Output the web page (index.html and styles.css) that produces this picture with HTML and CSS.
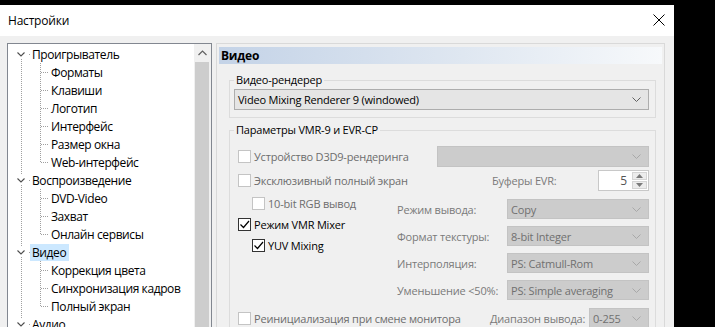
FILE: index.html
```html
<!DOCTYPE html>
<html lang="ru">
<head>
    <meta charset="UTF-8">
    <title>Настройки</title>
    <link rel="stylesheet" href="styles.css">
</head>
<body>
    <div class="window">
        <div class="titlebar">
            <span class="title">Настройки</span>
            <span class="close">
                <svg width="12" height="12" viewBox="0 0 12 12"><path d="M0.5 0.5L11.5 11.5M11.5 0.5L0.5 11.5"/></svg>
            </span>
        </div>
        <div class="dialog">
            <!-- page tree -->
            <div class="tree">
                <div class="tree-list">
                    <div class="node top">
                        <svg class="lines" width="22" height="18"><path d="M13.5 14V18M21 9.5H22"/><path class="chev" d="M9.5 7.5L13 11L16.5 7.5"/></svg>
                        <span class="label">Проигрыватель</span>
                    </div>
                    <div class="node"><svg class="lines" width="41" height="18"><path d="M13.5 0V18M32.5 0V18M33 9.5H41"/></svg><span class="label">Форматы</span></div>
                    <div class="node"><svg class="lines" width="41" height="18"><path d="M13.5 0V18M32.5 0V18M33 9.5H41"/></svg><span class="label">Клавиши</span></div>
                    <div class="node"><svg class="lines" width="41" height="18"><path d="M13.5 0V18M32.5 0V18M33 9.5H41"/></svg><span class="label">Логотип</span></div>
                    <div class="node"><svg class="lines" width="41" height="18"><path d="M13.5 0V18M32.5 0V18M33 9.5H41"/></svg><span class="label">Интерфейс</span></div>
                    <div class="node"><svg class="lines" width="41" height="18"><path d="M13.5 0V18M32.5 0V18M33 9.5H41"/></svg><span class="label">Размер окна</span></div>
                    <div class="node"><svg class="lines" width="41" height="18"><path d="M13.5 0V18M32.5 0V10M33 9.5H41"/></svg><span class="label">Web-интерфейс</span></div>
                    <div class="node top">
                        <svg class="lines" width="22" height="18"><path d="M13.5 0V4M13.5 14V18M21 9.5H22"/><path class="chev" d="M9.5 7.5L13 11L16.5 7.5"/></svg>
                        <span class="label">Воспроизведение</span>
                    </div>
                    <div class="node"><svg class="lines" width="41" height="18"><path d="M13.5 0V18M32.5 0V18M33 9.5H41"/></svg><span class="label">DVD-Video</span></div>
                    <div class="node"><svg class="lines" width="41" height="18"><path d="M13.5 0V18M32.5 0V18M33 9.5H41"/></svg><span class="label">Захват</span></div>
                    <div class="node"><svg class="lines" width="41" height="18"><path d="M13.5 0V18M32.5 0V10M33 9.5H41"/></svg><span class="label">Онлайн сервисы</span></div>
                    <div class="node top">
                        <svg class="lines" width="22" height="18"><path d="M13.5 0V4M13.5 14V18M21 9.5H22"/><path class="chev" d="M9.5 7.5L13 11L16.5 7.5"/></svg>
                        <span class="label selected">Видео</span>
                    </div>
                    <div class="node"><svg class="lines" width="41" height="18"><path d="M13.5 0V18M32.5 0V18M33 9.5H41"/></svg><span class="label">Коррекция цвета</span></div>
                    <div class="node"><svg class="lines" width="41" height="18"><path d="M13.5 0V18M32.5 0V18M33 9.5H41"/></svg><span class="label">Синхронизация кадров</span></div>
                    <div class="node"><svg class="lines" width="41" height="18"><path d="M13.5 0V18M32.5 0V10M33 9.5H41"/></svg><span class="label">Полный экран</span></div>
                    <div class="node top">
                        <svg class="lines" width="22" height="18"><path d="M13.5 0V4M13.5 14V18M21 9.5H22"/><path class="chev" d="M9.5 7.5L13 11L16.5 7.5"/></svg>
                        <span class="label">Аудио</span>
                    </div>
                </div>
                <div class="scrollbar">
                    <div class="sb-up">
                        <svg width="9" height="6" viewBox="0 0 9 6"><path d="M0.5 5L4.5 1L8.5 5"/></svg>
                    </div>
                    <div class="sb-thumb"></div>
                </div>
            </div>

            <!-- property page -->
            <div class="page">
                <div class="page-header">Видео</div>

                <fieldset class="group">
                    <legend>Видео-рендерер</legend>
                    <div class="combo">
                        <span class="combo-text">Video Mixing Renderer 9 (windowed)</span>
                        <svg class="chevron" width="9" height="5" viewBox="0 0 9 5"><path d="M0.5 0.5L4.5 4.5L8.5 0.5"/></svg>
                    </div>
                </fieldset>

                <fieldset class="group vmr">
                    <legend>Параметры VMR-9 и EVR-CP</legend>

                    <div class="row first">
                        <label class="check disabled"><span class="box"></span>Устройство D3D9-рендеринга</label>
                        <div class="combo disabled d3d"><span class="combo-text"></span><svg class="chevron" width="9" height="5" viewBox="0 0 9 5"><path d="M0.5 0.5L4.5 4.5L8.5 0.5"/></svg></div>
                    </div>

                    <div class="row">
                        <label class="check disabled"><span class="box"></span>Эксклюзивный полный экран</label>
                        <div class="pair buffers">
                            <span class="caption">Буферы EVR:</span>
                            <div class="spin">
                                <span class="spin-value">5</span>
                                <div class="spin-buttons">
                                    <span class="spin-btn"><svg width="7" height="4" viewBox="0 0 7 4"><path d="M0 4L3.5 0L7 4Z"/></svg></span>
                                    <span class="spin-btn"><svg width="7" height="4" viewBox="0 0 7 4"><path d="M0 0L3.5 4L7 0Z"/></svg></span>
                                </div>
                            </div>
                        </div>
                    </div>

                    <div class="middle">
                        <div class="checks">
                            <label class="check disabled sub"><span class="box"></span>10-bit RGB вывод</label>
                            <label class="check"><span class="box checked"><svg width="11" height="11" viewBox="0 0 11 11"><path d="M1.5 5.5L4.5 8.5L10 2"/></svg></span>Режим VMR Mixer</label>
                            <label class="check sub"><span class="box checked"><svg width="11" height="11" viewBox="0 0 11 11"><path d="M1.5 5.5L4.5 8.5L10 2"/></svg></span>YUV Mixing</label>
                        </div>
                        <div class="options">
                            <div class="option">
                                <span class="caption">Режим вывода:</span>
                                <div class="combo disabled small"><span class="combo-text">Copy</span><svg class="chevron" width="9" height="5" viewBox="0 0 9 5"><path d="M0.5 0.5L4.5 4.5L8.5 0.5"/></svg></div>
                            </div>
                            <div class="option">
                                <span class="caption">Формат текстуры:</span>
                                <div class="combo disabled small"><span class="combo-text">8-bit Integer</span><svg class="chevron" width="9" height="5" viewBox="0 0 9 5"><path d="M0.5 0.5L4.5 4.5L8.5 0.5"/></svg></div>
                            </div>
                            <div class="option">
                                <span class="caption">Интерполяция:</span>
                                <div class="combo disabled small"><span class="combo-text">PS: Catmull-Rom</span><svg class="chevron" width="9" height="5" viewBox="0 0 9 5"><path d="M0.5 0.5L4.5 4.5L8.5 0.5"/></svg></div>
                            </div>
                            <div class="option">
                                <span class="caption">Уменьшение &lt;50%:</span>
                                <div class="combo disabled small"><span class="combo-text">PS: Simple averaging</span><svg class="chevron" width="9" height="5" viewBox="0 0 9 5"><path d="M0.5 0.5L4.5 4.5L8.5 0.5"/></svg></div>
                            </div>
                        </div>
                    </div>

                    <div class="row last">
                        <label class="check disabled"><span class="box"></span>Реинициализация при смене монитора</label>
                        <div class="pair range">
                            <span class="caption">Диапазон вывода:</span>
                            <div class="combo disabled tiny"><span class="combo-text">0-255</span><svg class="chevron" width="9" height="5" viewBox="0 0 9 5"><path d="M0.5 0.5L4.5 4.5L8.5 0.5"/></svg></div>
                        </div>
                    </div>
                </fieldset>
            </div>
        </div>
    </div>
</body>
</html>
```

FILE: styles.css
```css
html, body {
    margin: 0;
    padding: 0;
}
body {
    width: 715px;
    height: 327px;
    overflow: hidden;
    background: #000;
    font-family: "Open Sans", "Noto Sans", Arial, sans-serif;
    font-size: 12px;
    color: #000;
}
.window {
    width: 674px;
    height: 322px;
    margin-top: 5px;
    background: #f0f0f0;
    overflow: hidden;
    display: flex;
    flex-direction: column;
}

/* title bar */
.titlebar {
    height: 31px;
    flex: none;
    background: #fff;
    display: flex;
    align-items: center;
    justify-content: space-between;
    padding: 0 9px 0 8px;
}
.title {
    font-size: 12px;
    letter-spacing: -0.2px;
    margin-top: -1px;
}
.close {
    display: flex;
    margin-top: -1px;
}
.close path {
    stroke: #000;
    stroke-width: 1;
    fill: none;
}

.dialog {
    flex: 1;
    display: flex;
    align-items: flex-start;
    padding: 7px 0 0 7px;
    min-height: 0;
}

/* tree */
.tree {
    width: 205px;
    height: 300px;
    box-sizing: border-box;
    border: 1px solid #828790;
    background: #fff;
    display: flex;
    flex: none;
}
.tree-list {
    flex: 1;
    padding-top: 1px;
    letter-spacing: -0.4px;
}
.node {
    height: 18px;
    display: flex;
    align-items: center;
    white-space: nowrap;
}
.lines {
    flex: none;
    display: block;
}
.lines path {
    stroke: #a0a0a0;
    stroke-dasharray: 1 1;
    fill: none;
    shape-rendering: crispEdges;
}
.lines path.chev {
    stroke: #4d4d4d;
    stroke-dasharray: none;
    stroke-width: 1.1;
    shape-rendering: auto;
}
.label {
    padding: 0 3px 0 2px;
    line-height: 17px;
}
.label.selected {
    background: #cce8ff;
}
.scrollbar {
    width: 17px;
    flex: none;
    background: #f0f0f0;
    display: flex;
    flex-direction: column;
}
.sb-up {
    height: 17px;
    display: flex;
    align-items: center;
    justify-content: center;
}
.sb-up path {
    stroke: #606060;
    fill: none;
    stroke-width: 1.2;
}
.sb-thumb {
    flex: 1;
    margin: 1px 2px 0 1px;
    background: #cdcdcd;
}

/* property page */
.page {
    width: 449px;
    height: 300px;
    box-sizing: border-box;
    margin-left: 4px;
    border: 1px solid #d9d9d9;
    padding: 3px 1px 0 2px;
    flex: none;
    font-size: 11px;
    letter-spacing: -0.2px;
}
.page-header {
    height: 17px;
    line-height: 17px;
    padding-left: 2px;
    margin-right: 1px;
    font-size: 12px;
    font-weight: bold;
    background: linear-gradient(to right, #c4d3e7, #dfe7f1 55%, #f7f9fb);
}
.group {
    margin: 8px 7px 0 10px;
    border: 1px solid #dcdcdc;
    padding: 1px 6px 7px 4px;
    min-width: 0;
}
.group legend {
    padding: 0 2px;
    line-height: 16px;
}
.group.vmr {
    margin-top: 4px;
    padding-bottom: 20px;
}

/* combo boxes */
.combo {
    height: 21px;
    box-sizing: border-box;
    border: 1px solid #adadad;
    background: #e5e5e5;
    display: flex;
    align-items: center;
    justify-content: space-between;
    padding: 0 7px 0 3px;
}
.chevron path {
    stroke: #606060;
    fill: none;
    stroke-width: 1;
}
.combo.disabled {
    background: #cccccc;
    border-color: #c3c3c3;
    color: #707070;
}
.combo.disabled .chevron path {
    stroke: #a8a8a8;
}
.combo.d3d {
    width: 212px;
}
.combo.small {
    width: 142px;
    height: 20px;
}
.combo.tiny {
    width: 60px;
}

/* rows in the VMR group */
.row {
    display: flex;
    align-items: center;
    justify-content: space-between;
    height: 21px;
    margin-top: 3px;
}
.row.first {
    margin-top: 7px;
}
.row.last {
    margin-top: 8px;
}
.check {
    display: flex;
    align-items: center;
    gap: 3px;
    margin-left: 4px;
    white-space: nowrap;
}
.check.sub {
    margin-left: 18px;
}
.check.disabled {
    color: #6d6d6d;
}
.box {
    width: 13px;
    height: 13px;
    box-sizing: border-box;
    border: 1px solid #333;
    background: #fff;
    display: flex;
    align-items: center;
    justify-content: center;
    flex: none;
}
.check.disabled .box {
    border-color: #c4c4c4;
}
.box svg path {
    stroke: #000;
    stroke-width: 1.2;
    fill: none;
}
.caption {
    color: #7a7a7a;
    white-space: nowrap;
}
.pair {
    display: flex;
    align-items: center;
    justify-content: space-between;
}
.pair.buffers {
    width: 157px;
}
.pair.range {
    width: 159px;
}

/* spin box */
.spin {
    width: 51px;
    height: 21px;
    box-sizing: border-box;
    border: 1px solid #c8c8c8;
    background: #fff;
    display: flex;
}
.spin-value {
    flex: 1;
    text-align: right;
    padding-right: 5px;
    line-height: 19px;
    font-size: 12px;
    color: #555;
}
.spin-buttons {
    width: 15px;
    display: flex;
    flex-direction: column;
    gap: 1px;
    padding: 1px 1px 1px 0;
}
.spin-btn {
    flex: 1;
    background: #ececec;
    border: 1px solid #d4d4d4;
    display: flex;
    align-items: center;
    justify-content: center;
}
.spin-btn path {
    fill: #7a7a7a;
}

/* middle block: checkboxes left, option combos right */
.middle {
    display: flex;
}
.checks {
    width: 163px;
    flex: none;
    display: flex;
    flex-direction: column;
    margin-top: 2px;
}
.checks .check {
    height: 21px;
}
.options {
    flex: 1;
    display: flex;
    flex-direction: column;
    gap: 7px;
    padding-top: 8px;
}
.option {
    display: flex;
    align-items: center;
    justify-content: space-between;
}
```
